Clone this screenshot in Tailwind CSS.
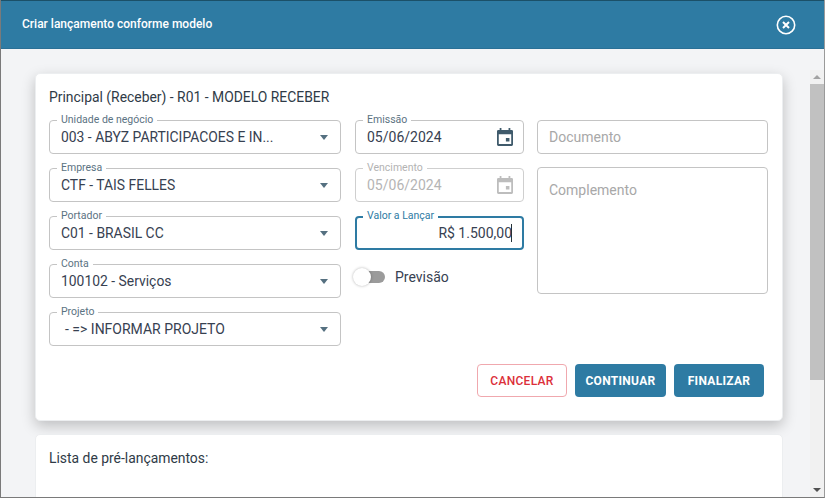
<!DOCTYPE html>
<html lang="pt-BR">
<head>
    <meta charset="UTF-8">
    <title>Criar lançamento conforme modelo</title>
    <script src="https://cdn.jsdelivr.net/npm/@tailwindcss/browser@4"></script>
</head>
<body class="overflow-hidden bg-[#f3f4f6] font-['Roboto',sans-serif]">
    <div class="w-[825px] h-[498px] flex flex-col overflow-hidden border-l border-b border-r border-[#7a7a7a] border-r-[#9a9a9a]">
        <!-- Header -->
        <header class="h-[49px] shrink-0 bg-[#2e7ba3] border-t border-t-[#1b5068] border-b border-b-[#2a7096] flex items-center justify-between pl-[21px] pr-[28px]">
            <h1 class="text-white text-[12px] font-medium -translate-y-px">Criar lançamento conforme modelo</h1>
            <svg width="20" height="20" viewBox="0 0 20 20" fill="none" stroke="white">
                <circle cx="10" cy="10" r="8.7" stroke-width="1.6"/>
                <path d="M7 7l6 6M13 7l-6 6" stroke-width="2"/>
            </svg>
        </header>

        <div class="flex flex-1 min-h-0">
            <!-- Content -->
            <main class="w-[809px] pl-[34px] pr-[27px] pt-[24px] overflow-hidden">
                <section class="h-[348px] bg-white rounded-[5px] border border-[#eceef0] shadow-[0_5px_14px_rgba(0,0,0,0.22)] pt-[13px] pl-[13px] pr-[13px]">
                    <h2 class="text-[13.9px] leading-[20px] text-[#2f3b47]">Principal (Receber) - R01 - MODELO RECEBER</h2>

                    <div class="flex gap-[14px] mt-[13px]">
                        <!-- Left column -->
                        <div class="w-[292px] flex flex-col gap-[14px]">
                            <div class="relative h-[34px] rounded-[4px] border border-[#c4c4c4] flex items-center justify-between pl-[11px] pr-[12px]">
                                <span class="absolute -top-[8px] left-[7px] bg-white px-[4px] text-[10.5px] leading-[14px] text-[#5b7282]">Unidade de negócio</span>
                                <span class="text-[13.9px] text-[#374151]">003 - ABYZ PARTICIPACOES E IN...</span>
                                <span class="w-0 h-0 border-x-[4.5px] border-x-transparent border-t-[5px] border-t-[#557080]"></span>
                            </div>
                            <div class="relative h-[34px] rounded-[4px] border border-[#c4c4c4] flex items-center justify-between pl-[11px] pr-[12px]">
                                <span class="absolute -top-[8px] left-[7px] bg-white px-[4px] text-[10.5px] leading-[14px] text-[#5b7282]">Empresa</span>
                                <span class="text-[13.9px] text-[#374151]">CTF - TAIS FELLES</span>
                                <span class="w-0 h-0 border-x-[4.5px] border-x-transparent border-t-[5px] border-t-[#557080]"></span>
                            </div>
                            <div class="relative h-[34px] rounded-[4px] border border-[#c4c4c4] flex items-center justify-between pl-[11px] pr-[12px]">
                                <span class="absolute -top-[8px] left-[7px] bg-white px-[4px] text-[10.5px] leading-[14px] text-[#5b7282]">Portador</span>
                                <span class="text-[13.9px] text-[#374151]">C01 - BRASIL CC</span>
                                <span class="w-0 h-0 border-x-[4.5px] border-x-transparent border-t-[5px] border-t-[#557080]"></span>
                            </div>
                            <div class="relative h-[34px] rounded-[4px] border border-[#c4c4c4] flex items-center justify-between pl-[11px] pr-[12px]">
                                <span class="absolute -top-[8px] left-[7px] bg-white px-[4px] text-[10.5px] leading-[14px] text-[#5b7282]">Conta</span>
                                <span class="text-[13.9px] text-[#374151]">100102 - Serviços</span>
                                <span class="w-0 h-0 border-x-[4.5px] border-x-transparent border-t-[5px] border-t-[#557080]"></span>
                            </div>
                            <div class="relative h-[34px] rounded-[4px] border border-[#c4c4c4] flex items-center justify-between pl-[15px] pr-[12px]">
                                <span class="absolute -top-[8px] left-[7px] bg-white px-[4px] text-[10.5px] leading-[14px] text-[#5b7282]">Projeto</span>
                                <span class="text-[14px] text-[#374151]">- =&gt; INFORMAR PROJETO</span>
                                <span class="w-0 h-0 border-x-[4.5px] border-x-transparent border-t-[5px] border-t-[#557080]"></span>
                            </div>
                        </div>

                        <!-- Middle column -->
                        <div class="w-[169px] flex flex-col gap-[14px]">
                            <div class="relative h-[34px] rounded-[4px] border border-[#c4c4c4] flex items-center justify-between pl-[11px] pr-[10px]">
                                <span class="absolute -top-[8px] left-[7px] bg-white px-[4px] text-[10.5px] leading-[14px] text-[#5b7282]">Emissão</span>
                                <span class="text-[14px] text-[#374151]">05/06/2024</span>
                                <svg width="16" height="18" viewBox="0 0 18 20" fill="#3f5a6b"><path d="M3 0h2v2h8V0h2v2h1.500A1.500 1.500 0 0 1 18 3.500v15a1.500 1.500 0 0 1-1.500 1.500h-15A1.500 1.500 0 0 1 0 18.500v-15A1.500 1.500 0 0 1 1.500 2H3V0zM2 7v11h14V7H2zm8 4h4v4h-4v-4z" fill-rule="evenodd"/></svg>
                            </div>
                            <div class="relative h-[34px] rounded-[4px] border border-[#cfcfcf] flex items-center justify-between pl-[11px] pr-[10px]">
                                <span class="absolute -top-[8px] left-[7px] bg-white px-[4px] text-[10.5px] leading-[14px] text-[#b3b3b3]">Vencimento</span>
                                <span class="text-[14px] text-[#b5b5b5]">05/06/2024</span>
                                <svg width="16" height="18" viewBox="0 0 18 20" fill="#bdbdbd"><path d="M3 0h2v2h8V0h2v2h1.500A1.500 1.500 0 0 1 18 3.500v15a1.500 1.500 0 0 1-1.500 1.500h-15A1.500 1.500 0 0 1 0 18.500v-15A1.500 1.500 0 0 1 1.500 2H3V0zM2 7v11h14V7H2zm8 4h4v4h-4v-4z" fill-rule="evenodd"/></svg>
                            </div>
                            <div class="relative h-[34px] rounded-[4px] border-2 border-[#2e7ba3] flex items-center justify-end pr-[10px]">
                                <span class="absolute -top-[9px] left-[6px] bg-white px-[4px] text-[10.5px] leading-[14px] text-[#2e7ba3]">Valor a Lançar</span>
                                <span class="text-[14px] text-[#374151]">R$ 1.500,00</span>
                                <span class="absolute right-[10px] top-[6px] w-px h-[18px] bg-[#263238]"></span>
                            </div>
                            <div class="relative h-[34px] -mt-[4px] flex items-center pl-[40px] text-[14px] text-[#374151]">
                                <span class="absolute left-[12px] top-[11px] w-[18px] h-[12px] rounded-r-full bg-[#9b9b9b]"></span>
                                <span class="absolute left-[-2px] top-[8px] w-[18px] h-[18px] rounded-full bg-white shadow-[0_0_3px_rgba(0,0,0,0.3)]"></span>
                                Previsão
                            </div>
                        </div>

                        <!-- Right column -->
                        <div class="w-[231px] -ml-px flex flex-col gap-[13px]">
                            <div class="h-[34px] rounded-[4px] border border-[#c4c4c4] flex items-center pl-[11px] text-[14px] text-[#a8a8a8]">Documento</div>
                            <div class="h-[127px] rounded-[4px] border border-[#c4c4c4] pl-[11px] pt-[13px] text-[14px] leading-[18px] text-[#a8a8a8]">Complemento</div>
                        </div>
                    </div>

                    <!-- Actions -->
                    <div class="flex justify-end gap-[8px] mt-[18px] pr-[5px]">
                        <button class="w-[90px] h-[33px] rounded-[4px] bg-white border border-[#f0a8ae] text-[#dc2f3a] text-[12px] font-medium tracking-[0.3px]">CANCELAR</button>
                        <button class="w-[91px] h-[33px] rounded-[4px] bg-[#2e7ba3] text-white text-[12px] font-bold tracking-[0.3px]">CONTINUAR</button>
                        <button class="w-[90px] h-[33px] rounded-[4px] bg-[#2e7ba3] text-white text-[12px] font-bold tracking-[0.3px]">FINALIZAR</button>
                    </div>
                </section>

                <section class="mt-[13px] h-[100px] bg-white rounded-[5px] border border-[#eceef0] pt-[13px] pl-[13px]">
                    <h2 class="text-[13.9px] leading-[20px] text-[#2f3b47]">Lista de pré-lançamentos:</h2>
                </section>
            </main>

            <!-- Scrollbar -->
            <div class="flex-1 flex flex-col items-center pt-[21px]">
                <div class="w-[14px] flex-1 bg-[#f1f1f1] flex flex-col items-center">
                    <span class="mt-[5px] w-0 h-0 border-x-[4px] border-x-transparent border-b-[4px] border-b-[#a3a3a3]"></span>
                    <span class="mt-[5px] w-full h-[296px] bg-[#c1c1c1]"></span>
                    <span class="mt-auto mb-[5px] w-0 h-0 border-x-[4px] border-x-transparent border-t-[4px] border-t-[#505050]"></span>
                </div>
            </div>
        </div>
    </div>
</body>
</html>
